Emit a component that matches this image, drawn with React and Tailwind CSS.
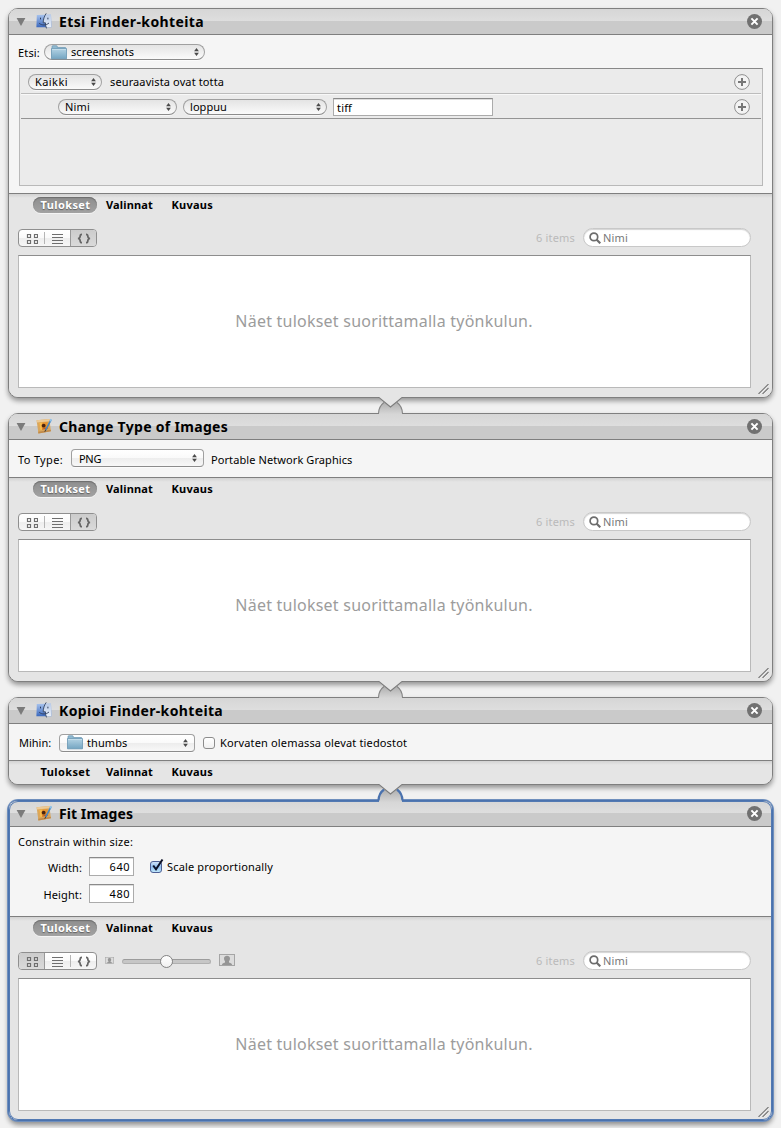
import React from "react";

function FinderIcon() {
  return (
    <svg className="h-4 w-4" viewBox="0 0 16 16">
      <defs>
        <linearGradient id="finderLeft" x1="0" y1="0" x2="0" y2="1">
          <stop offset="0" stopColor="#a9c4ee" />
          <stop offset="1" stopColor="#3a68bd" />
        </linearGradient>
        <linearGradient id="finderRight" x1="0" y1="0" x2="0" y2="1">
          <stop offset="0" stopColor="#b9cbe8" />
          <stop offset="1" stopColor="#e9eff8" />
        </linearGradient>
      </defs>
      <path d="M.8 2 15 1.500 15.500 14.300H.4Z" fill="url(#finderLeft)" />
      <path d="M9.700 1.700H15l.5 12.600H10c-.3-1.400-.5-2.800-.6-4.500H7.200C7.400 6.500 8.300 3.800 9.700 1.700Z" fill="url(#finderRight)" />
      <path d="M10.200 .4C8.200 3.300 7.300 6.200 7.200 9.800h2.200c.1 2.200.4 3.900 1.100 5.600" fill="none" stroke="#34445f" strokeWidth=".9" />
      <path d="M3.200 10.300c2.800 2.300 6.800 2.200 9.800-.3" fill="none" stroke="#2c3c5c" strokeWidth=".9" />
      <path d="M4.500 4.700v1.700M11.900 4.700v1.700" stroke="#2c3c5c" strokeWidth="1" />
    </svg>
  );
}

function PreviewIcon() {
  return (
    <svg className="h-4 w-4" viewBox="0 0 16 16">
      <path d="M.6 2.200 13.400 .9 14.900 13.200 2.400 15.500Z" fill="#d9a65c" />
      <path d="M.6 2.200 13.400 .9 13.700 3.300 .9 4.600Z" fill="#ecca96" />
      <path d="M2.200 13.700 14.700 11.700 14.900 13.200 2.400 15.500Z" fill="#c08a4a" />
      <path d="M3.300 4.900 11.500 4 12.300 10.700 4.300 12Z" fill="#e8952e" />
      <path d="M3.300 4.900 6.500 4.500 5.200 7.500 6.500 11.700 4.300 12Z" fill="#f5bc4c" />
      <circle cx="7.700" cy="7.700" r="1.900" fill="#4a2410" />
      <path d="M6.300 10.700 11 9 12 10.700 6 11.600Z" fill="#c05a22" />
      <path d="M15 1.800 9.500 12.300" stroke="#4587c4" strokeWidth="1.600" />
      <path d="M15.300 1.200 14.200 3.400" stroke="#8fc3ea" strokeWidth="1.700" />
      <path d="M9.700 11.800 8.800 13.800" stroke="#4a3a30" strokeWidth="1" />
    </svg>
  );
}

function Folder() {
  return (
    <svg className="h-[15px] w-4 shrink-0" viewBox="0 0 16 15">
      <defs>
        <linearGradient id="folderFront" x1="0" y1="0" x2="0" y2="1">
          <stop offset="0" stopColor="#b4d3e4" />
          <stop offset="1" stopColor="#74a5c2" />
        </linearGradient>
      </defs>
      <path d="M1 3V1.500C1 1 1.300.7 1.800.7H5.500c.5 0 .8.300 .8.800V2.500H14.500V5H1Z" fill="#8fb9d0" stroke="#6a97b1" strokeWidth=".7" />
      <path d="M.5 3.500h15V13.800H.5Z" fill="url(#folderFront)" stroke="#6796b2" strokeWidth=".8" />
      <path d="M1 4.400H15" stroke="#cde3ef" strokeWidth=".8" />
    </svg>
  );
}

function Arrows() {
  return (
    <svg className="h-2 w-[5px] shrink-0" viewBox="0 0 5 8">
      <path d="M2.500 0 4.900 3.200H.1ZM2.500 8 4.900 4.800H.1Z" fill="#4a4a4a" />
    </svg>
  );
}

function Popup({ className, round, children }) {
  return (
    <div
      className={
        "flex shrink-0 items-center justify-between border border-[#a0a0a0] border-b-[#8c8c8c] text-black shadow-[0_1px_0_rgba(255,255,255,.6)] " +
        (round
          ? "h-4 rounded-full bg-[linear-gradient(#e4e4e4,#fafafa)] "
          : "h-[18px] rounded-[4px] bg-[linear-gradient(#ffffff,#fafafa_48%,#ededed_52%,#f8f8f8)] ") +
        className
      }
    >
      <div className="flex items-center">{children}</div>
      <Arrows />
    </div>
  );
}

function Plus() {
  return (
    <svg className="h-4 w-4" viewBox="0 0 16 16">
      <circle cx="8" cy="8" r="7.400" fill="#f3f3f3" stroke="#8f8f8f" />
      <path d="M8 4v8M4 8h8" stroke="#777" strokeWidth="2" />
    </svg>
  );
}

function Header({ icon, title, tracking }) {
  return (
    <div className="flex h-[26px] items-center rounded-t-[8px] border-b border-[#7f7f7f] bg-[linear-gradient(#d6d6d6,#dedede_12px,#cacaca_12px,#cacaca)] pl-2">
      <svg className="-ml-px mt-px h-2 w-[10px]" viewBox="0 0 10 8">
        <path d="M.6 0H9.400L5 8Z" fill="#7b7b7b" />
      </svg>
      <div className="mb-px ml-[10px]">{icon}</div>
      <div className={"ml-[7px] text-[14px] font-bold leading-[24px] text-black " + tracking}>{title}</div>
      <svg className="ml-auto mr-[10px] h-[15px] w-[15px]" viewBox="0 0 15 15">
        <circle cx="7.500" cy="7.500" r="7.500" fill="#717171" />
        <path d="M4.400 4.400 10.600 10.600M10.600 4.400 4.400 10.600" stroke="#fff" strokeWidth="2" />
      </svg>
    </div>
  );
}

function Tabs({ active }) {
  return (
    <div className="flex h-4 items-center pl-6 text-[11px] font-bold leading-4">
      <div
        className={
          "flex h-4 w-16 items-center justify-center rounded-full pl-px tracking-[.4px] " +
          (active
            ? "bg-[linear-gradient(#8e8e8e,#a2a2a2)] text-white shadow-[inset_0_1px_1px_#6c6c6c,0_1px_0_#f4f4f4] [text-shadow:0_1px_1px_rgba(0,0,0,.4)]"
            : "text-black")
        }
      >
        Tulokset
      </div>
      <div className="ml-[9px] tracking-[.16px]">Valinnat</div>
      <div className="ml-[18.500px] tracking-[.25px]">Kuvaus</div>
    </div>
  );
}

function ViewSwitch({ selected }) {
  const cell = "flex h-4 items-center justify-center ";
  const on = "bg-[linear-gradient(#cccccc,#dadada)] ";
  return (
    <div className="flex h-[18px] w-[79px] overflow-hidden rounded-[4px] border border-[#8f8f8f] bg-[linear-gradient(#ffffff,#fafafa_48%,#eeeeee_52%,#f6f6f6)]">
      <div className={cell + (selected === 0 ? "w-[26px] border-r border-[#999] " + on : "w-[25px]")}>
        <svg className="h-[11px] w-3" viewBox="0 0 12 11">
          <path d="M1.500 1.500h3v3h-3ZM8.500 1.500h3v3h-3ZM1.500 7.500h3v3h-3ZM8.500 7.500h3v3h-3Z" fill="none" stroke="#6e6e6e" strokeWidth="1.200" />
        </svg>
      </div>
      {selected !== 0 && <div className="my-[2px] w-px bg-[#b5b5b5]" />}
      <div className={cell + "w-[25px]"}>
        <svg className="h-[11px] w-[11px]" viewBox="0 0 11 11">
          <path d="M0 1.500H11M0 4.500H11M0 7.500H11M0 10.500H11" stroke="#6e6e6e" />
        </svg>
      </div>
      {selected === 0 && <div className="my-[2px] w-px bg-[#b5b5b5]" />}
      <div className={cell + "flex-1 " + (selected === 2 ? on + "border-l border-[#999]" : "")}>
        <svg className="h-[11px] w-[14px]" viewBox="0 0 14 11">
          <path
            d="M5 1.300C3.400 1.300 3.200 1.800 3.200 3 3.200 4.500 2.900 5.200 1 5.500 2.900 5.800 3.200 6.500 3.200 8 3.200 9.200 3.400 9.700 5 9.700M9 1.300C10.600 1.300 10.800 1.800 10.800 3 10.800 4.500 11.100 5.200 13 5.500 11.100 5.800 10.800 6.500 10.800 8 10.800 9.200 10.600 9.700 9 9.700"
            fill="none"
            stroke="#666"
            strokeWidth="1.700"
          />
        </svg>
      </div>
    </div>
  );
}

function Person({ className }) {
  return (
    <svg className={className} viewBox="0 0 16 12">
      <rect x=".5" y=".5" width="15" height="11" fill="#dcdcdc" stroke="#a5a5a5" />
      <path d="M3 11c0-1.500 1-2 3-2.500V7.300C5.300 6.500 5 5.500 5 4.500 5 2.700 6.300 1.700 8 1.700s3 1 3 2.800c0 1-.3 2-1 2.800v1.200c2 .5 3 1 3 2.500Z" fill="#959595" />
    </svg>
  );
}

function SizeSlider() {
  return (
    <div className="mb-px ml-2 flex items-center">
      <Person className="h-[7px] w-[9px]" />
      <div className="ml-2 mt-px flex h-[5px] w-[89px] items-center rounded-full border border-[#b0b0b0] border-t-[#9c9c9c] bg-[#c6c6c6] pl-[37px]">
        <div className="h-[13px] w-[13px] shrink-0 rounded-full border border-[#838383] bg-[linear-gradient(#ffffff,#f0f0f0)]" />
      </div>
      <Person className="mb-px ml-2 h-3 w-4" />
    </div>
  );
}

function Results({ selected, slider }) {
  return (
    <div className="relative flex-1 rounded-b-[9px] bg-[linear-gradient(#d2d2d2,#e5e5e5_4px,#e5e5e5)] pt-[3px]">
      <Tabs active />
      <div className="mt-[15px] flex h-5 items-center pl-[9px] pr-[21px]">
        <ViewSwitch selected={selected} />
        {slider && <SizeSlider />}
        <div className="ml-auto text-[11px] leading-4 tracking-[.18px] text-[#bababa]">6 items</div>
        <div className="mb-px ml-[8px] flex h-[19px] w-[168px] items-center rounded-full border border-[#c8c8c8] bg-white pl-[5px] shadow-[inset_0_1px_1px_#d4d4d4]">
          <svg className="h-3 w-3" viewBox="0 0 12 12">
            <circle cx="4.900" cy="4.900" r="3.800" fill="none" stroke="#6d6d6d" strokeWidth="1.700" />
            <path d="M7.500 7.500 11.300 11.300" stroke="#6d6d6d" strokeWidth="2.200" />
          </svg>
          <div className="ml-[2px] text-[11px] leading-4 tracking-[.17px] text-[#777]">Nimi</div>
        </div>
      </div>
      <div className="ml-[9px] mt-[7px] flex h-[133px] w-[733px] items-center justify-center border border-[#b9b9b9] border-t-[#8d8d8d] bg-white">
        <div className="mb-[2px] mr-px text-[16px] leading-6 tracking-[.23px] text-[#9c9c9c]">Näet tulokset suorittamalla työnkulun.</div>
      </div>
      <svg className="absolute bottom-[3px] right-[3px] h-[10px] w-[11px]" viewBox="0 0 11 10">
        <path d="M1.600 10.200 11 .8M5.600 10.200 11 4.800" stroke="#fafafa" strokeWidth=".7" />
        <path d="M.5 10 10.500 0M4.500 10 10.500 4" stroke="#777" strokeWidth="1.100" />
      </svg>
    </div>
  );
}

function Connector({ active }) {
  return (
    <svg className="absolute bottom-[-18px] left-[368px] z-20 h-[19px] w-[27px]" viewBox="0 0 27 19">
      <defs>
        <linearGradient id="bump" x1="0" y1="0" x2="0" y2="1">
          <stop offset="0" stopColor="#adadad" />
          <stop offset="1" stopColor="#d6d6d6" />
        </linearGradient>
      </defs>
      <path d={active ? "M2 19V17C2 12 4.500 8 7 6H20C22.500 8 25 12 25 17V19Z" : "M2 18V17C2 12 4.500 8 7 6H20C22.500 8 25 12 25 17V18Z"} fill="url(#bump)" />
      <path
        d="M1.500 17.500C1.700 12.500 3.500 9 7 6.500M25.500 17.500C25.300 12.500 23.500 9 20 6.500"
        fill="none"
        stroke={active ? "#4a72ae" : "#868686"}
        strokeWidth={active ? 2.2 : 1.1}
      />
      <path d="M1 0H26V1.500L13.500 11 1 1.500Z" fill="#e5e5e5" />
      <path d="M1 1.500 2 1.500 13.500 11 25 1.500 26 1.500" fill="none" stroke="#7b7b7b" strokeWidth="1.100" />
    </svg>
  );
}

function Panel({ className, active, connector, children }) {
  return (
    <section
      className={
        "relative flex w-[765px] shrink-0 flex-col rounded-[10px] border bg-[#e5e5e5] " +
        (active
          ? "border-[#4a72ae] shadow-[0_0_0_1px_#6f8fbd,0_4px_5px_rgba(0,0,0,.4)] "
          : "border-[#7f7f7f] shadow-[0_3px_5px_rgba(0,0,0,.38)] ") +
        className
      }
    >
      {children}
      {active && <div className="pointer-events-none absolute inset-0 rounded-[9px] border border-[#5279b2]" />}
      {connector && <Connector active={connector === "active"} />}
    </section>
  );
}

function Body({ className, children }) {
  return (
    <div className={"shrink-0 border-b border-[#7f7f7f] bg-[#f5f5f5] text-[11px] leading-4 text-black " + className}>
      {children}
    </div>
  );
}

const field = "border border-[#ababab] border-t-[#8a8a8a] bg-white shadow-[inset_0_1px_0_#dedede] ";

export default function App() {
  return (
    <main className="flex h-[1128px] w-[781px] flex-col gap-[15px] overflow-hidden bg-[#f1f1f1] pl-2 pt-2 font-['Noto_Sans','Open_Sans',sans-serif]">
      <Panel className="h-[390px]" connector="normal">
        <Header icon={<FinderIcon />} title="Etsi Finder-kohteita" tracking="tracking-[.39px]" />
        <Body className="h-[159px]">
          <div className="flex items-start pl-[9px] pt-[9px]">
            <div className="mt-px w-[26px] tracking-[.17px]">Etsi:</div>
            <Popup round className="w-[161px] pl-[6px] pr-[5px]">
              <Folder />
              <div className="ml-[4px] tracking-[.09px]">screenshots</div>
            </Popup>
          </div>
          <div className="ml-[10px] mt-[7px] h-[118px] w-[744px] border border-[#b9b9b9] border-t-[#888] bg-[#ebebeb] px-px">
            <div className="flex h-[25px] items-center border-b border-[#bcbcbc] pl-[7px] pr-[11px] pt-[2px]">
              <Popup round className="w-[74px] pl-[6px] pr-[5px]">
                <div className="tracking-[.43px]">Kaikki</div>
              </Popup>
              <div className="ml-2 flex-1 tracking-[.12px]">seuraavista ovat totta</div>
              <Plus />
            </div>
            <div className="flex h-[25px] items-center border-b border-[#949494] pl-[37px] pr-[11px] pt-px shadow-[inset_0_1px_0_#f8f8f8]">
              <Popup round className="w-[119px] pl-[6px] pr-[5px]">
                <div className="tracking-[.17px]">Nimi</div>
              </Popup>
              <Popup round className="ml-[6px] w-36 pl-[6px] pr-[5px]">
                <div className="tracking-[.06px]">loppuu</div>
              </Popup>
              <div className={field + "ml-[6px] flex h-[18px] w-40 items-center pl-[3px] pt-[2px] tracking-[.16px]"}>tiff</div>
              <div className="ml-auto">
                <Plus />
              </div>
            </div>
          </div>
        </Body>
        <Results selected={2} />
      </Panel>

      <Panel className="h-[269px]" connector="normal">
        <Header icon={<PreviewIcon />} title="Change Type of Images" tracking="tracking-[.31px]" />
        <Body className="flex h-[38px] items-center pl-[9px]">
          <div className="mt-[3px] w-[53px] tracking-[.34px]">To Type:</div>
          <Popup className="mb-px w-[133px] pl-[7px] pr-[6px]">
            <div className="mt-[2px] tracking-[-.3px]">PNG</div>
          </Popup>
          <div className="ml-[7px] mt-[3px] tracking-[.09px]">Portable Network Graphics</div>
        </Body>
        <Results selected={2} />
      </Panel>

      <Panel className="h-[88px]" connector="active">
        <Header icon={<FinderIcon />} title="Kopioi Finder-kohteita" tracking="tracking-[.36px]" />
        <Body className="flex h-[37px] items-center pl-[10px] pt-px">
          <div className="w-10">Mihin:</div>
          <Popup className="w-[136px] pl-[7px] pr-[6px]">
            <Folder />
            <div className="ml-[4px] tracking-[.1px]">thumbs</div>
          </Popup>
          <div className="ml-2 h-3 w-3 rounded-[3px] border border-[#8c8c8c] bg-[linear-gradient(#ffffff,#f0f0f0)]" />
          <div className="ml-[5px] tracking-[.16px]">Korvaten olemassa olevat tiedostot</div>
        </Body>
        <div className="flex-1 rounded-b-[9px] bg-[linear-gradient(#d2d2d2,#e5e5e5_4px,#e5e5e5)] pt-[3px]">
          <Tabs />
        </div>
      </Panel>

      <Panel className="h-[321px]" active>
        <Header icon={<PreviewIcon />} title="Fit Images" tracking="tracking-[.07px]" />
        <Body className="h-[90px] pl-[9px] pt-[7px]">
          <div className="tracking-[.24px]">Constrain within size:</div>
          <div className="mt-[7px] flex h-[19px] items-center">
            <div className="mt-[2px] w-16 text-right tracking-[.08px]">Width:</div>
            <div className={field + "ml-[7px] flex h-[19px] w-[45px] items-center justify-end pr-[3px] tracking-[.5px]"}>640</div>
            <svg className="mb-[3px] ml-4 h-[15px] w-[14px]" viewBox="0 0 14 15">
              <defs>
                <linearGradient id="checked" x1="0" y1="0" x2="0" y2="1">
                  <stop offset="0" stopColor="#d5e5f8" />
                  <stop offset=".5" stopColor="#8fbdf0" />
                  <stop offset="1" stopColor="#c4ebfc" />
                </linearGradient>
              </defs>
              <rect x=".5" y="3.500" width="11" height="11" rx="2.500" fill="url(#checked)" stroke="#4d5f94" />
              <path d="M3.200 7.500 6 11.300 12.500 1.500" fill="none" stroke="#0c1026" strokeWidth="2" />
            </svg>
            <div className="ml-[3px] tracking-[.16px]">Scale proportionally</div>
          </div>
          <div className="mt-2 flex h-[19px] items-center">
            <div className="mt-[2px] w-16 text-right tracking-[.12px]">Height:</div>
            <div className={field + "ml-[7px] flex h-[19px] w-[45px] items-center justify-end pr-[3px] tracking-[.5px]"}>480</div>
          </div>
        </Body>
        <Results selected={0} slider />
      </Panel>
    </main>
  );
}
